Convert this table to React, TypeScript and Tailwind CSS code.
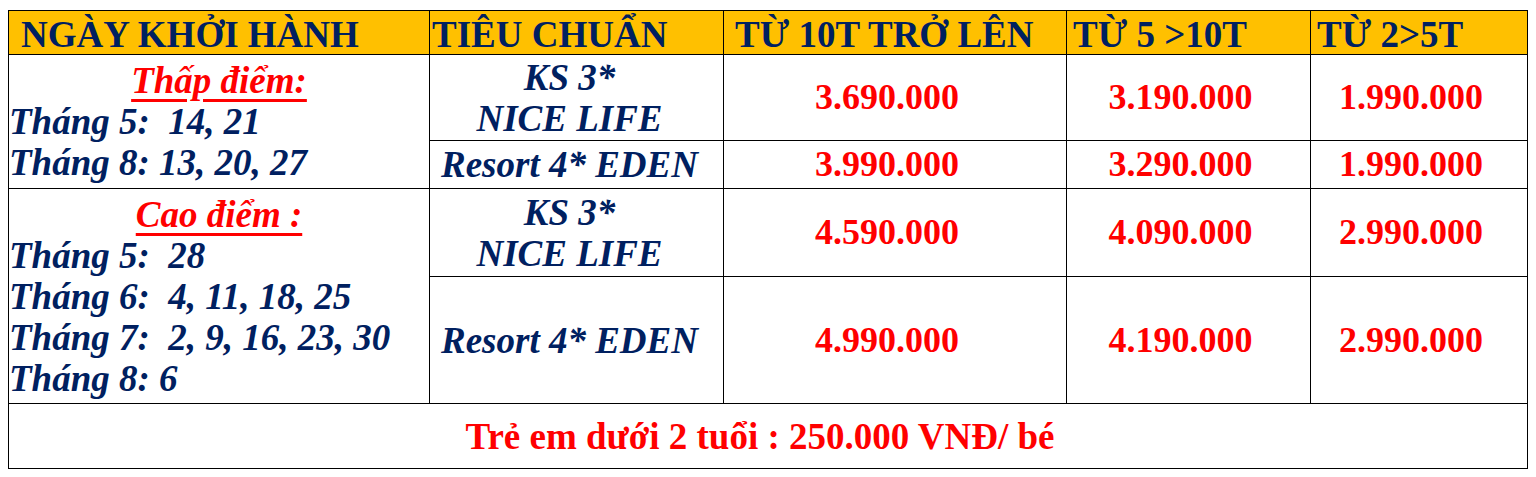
import React from "react";

const rows = [
    { hotel: ["KS 3*", "NICE LIFE"], prices: ["3.690.000", "3.190.000", "1.990.000"], h: "h-[86px]" },
    { hotel: ["Resort 4* EDEN"], prices: ["3.990.000", "3.290.000", "1.990.000"], h: "h-[48px]" },
    { hotel: ["KS 3*", "NICE LIFE"], prices: ["4.590.000", "4.090.000", "2.990.000"], h: "h-[88px]" },
    { hotel: ["Resort 4* EDEN"], prices: ["4.990.000", "4.190.000", "2.990.000"], h: "h-[127px]" },
];

const seasons = [
    { title: "Thấp điểm:", lines: ["Tháng 5:  14, 21", "Tháng 8: 13, 20, 27"] },
    { title: "Cao điểm :", lines: ["Tháng 5:  28", "Tháng 6:  4, 11, 18, 25", "Tháng 7:  2, 9, 16, 23, 30", "Tháng 8: 6"] },
];

export default function App() {
    return (
        <main className="min-h-screen bg-white pl-2 pt-[10px] font-['Liberation_Serif','Times_New_Roman',serif]">
            <table className="table-fixed border-collapse w-[1519px] text-[37px] leading-[41px] font-bold">
                <colgroup>
                    <col className="w-[421px]" />
                    <col className="w-[294px]" />
                    <col className="w-[343px]" />
                    <col className="w-[244px]" />
                    <col className="w-[217px]" />
                </colgroup>
                <thead>
                    <tr className="h-[44px] bg-[#ffc000] text-[#002060] leading-none text-left">
                        <th className="border border-black pl-[12px] pt-[3px] font-bold">NGÀY KHỞI HÀNH</th>
                        <th className="border border-black pl-[2px] pt-[3px] font-bold">TIÊU CHUẨN</th>
                        <th className="border border-black pl-[11px] pt-[3px] font-bold">TỪ 10T TRỞ LÊN</th>
                        <th className="border border-black pl-[6px] pt-[3px] font-bold">TỪ 5 &gt;10T</th>
                        <th className="border border-black pl-[6px] pt-[3px] font-bold">TỪ 2&gt;5T</th>
                    </tr>
                </thead>
                <tbody>
                    {rows.map((row, i) => (
                        <tr key={i} className={row.h}>
                            {i % 2 === 0 && (
                                <td rowSpan={2} className="border border-black px-0 py-0 align-middle italic text-[#002060]">
                                    <div className="text-center text-[#ff0000] underline decoration-[3px] underline-offset-[6px]">
                                        {seasons[i / 2].title}
                                    </div>
                                    {seasons[i / 2].lines.map((l) => (
                                        <div key={l} className="whitespace-pre">{l}</div>
                                    ))}
                                </td>
                            )}
                            <td className="border border-black p-0 text-center italic text-[#002060] pr-[14px]">
                                {row.hotel.map((t) => (
                                    <div key={t}>{t}</div>
                                ))}
                            </td>
                            {row.prices.map((p, j) => (
                                <td key={j} className="border border-black p-0 text-center text-[36px] text-[#ff0000] pr-[16px]">
                                    {p}
                                </td>
                            ))}
                        </tr>
                    ))}
                    <tr className="h-[65px]">
                        <td colSpan={5} className="border border-black p-0 text-center text-[#ff0000] pr-[16px]">
                            Trẻ em dưới 2 tuổi : 250.000 VNĐ/ bé
                        </td>
                    </tr>
                </tbody>
            </table>
        </main>
    );
}
